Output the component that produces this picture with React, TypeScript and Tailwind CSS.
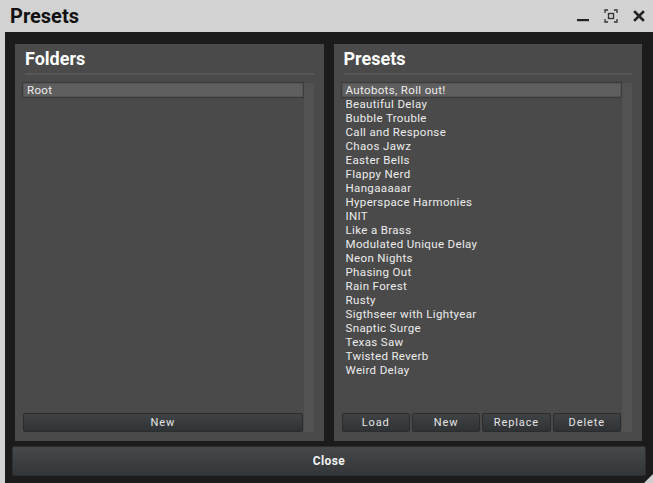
const presets = [
  'Autobots, Roll out!',
  'Beautiful Delay',
  'Bubble Trouble',
  'Call and Response',
  'Chaos Jawz',
  'Easter Bells',
  'Flappy Nerd',
  'Hangaaaaar',
  'Hyperspace Harmonies',
  'INIT',
  'Like a Brass',
  'Modulated Unique Delay',
  'Neon Nights',
  'Phasing Out',
  'Rain Forest',
  'Rusty',
  'Sigthseer with Lightyear',
  'Snaptic Surge',
  'Texas Saw',
  'Twisted Reverb',
  'Weird Delay',
];

const font = { fontFamily: 'Roboto, "Liberation Sans", sans-serif' };

function ListItem({ label, selected }: { label: string; selected?: boolean }) {
  return (
    <div
      className={
        'h-[14px] pl-[4px] text-[11.5px] leading-[14px] tracking-[0.35px] text-[#ececec] whitespace-nowrap ' +
        (selected ? 'bg-[#5f5f5f] shadow-[inset_0_0_0_1px_#545454,0_0_1px_1px_#3c3c3c]' : '')
      }
    >
      {label}
    </div>
  );
}

function PanelButton({ label }: { label: string }) {
  return (
    <button className="flex-1 h-[19px] rounded-[2px] border border-[#2a2c2e] bg-gradient-to-b from-[#404346] to-[#303336] text-[11px] tracking-[0.9px] text-[#e4e4e4] leading-[17px]">
      {label}
    </button>
  );
}

function Panel({
  title,
  items,
  buttons,
}: {
  title: string;
  items: string[];
  buttons: string[];
}) {
  return (
    <div className="flex-1 flex flex-col bg-[#4a4a4a] pt-[3px] pl-[8px] pr-[10px] pb-[9px]">
      <div className="pl-[2px] h-[23px] text-[18px] font-bold leading-[23px] text-white">{title}</div>
      <div className="ml-[2px] mt-[3px] h-[2px] bg-[#575757]" />
      <div className="mt-[8px] flex flex-1 gap-[1px]">
        <div className="flex flex-1 flex-col">
          <div className="flex-1">
            {items.map((it, i) => (
              <ListItem key={it} label={it} selected={i === 0} />
            ))}
          </div>
          <div className="flex gap-[2px]">
            {buttons.map((b) => (
              <PanelButton key={b} label={b} />
            ))}
          </div>
        </div>
        <div className="w-[10px] bg-[#525252]" />
      </div>
    </div>
  );
}

export default function App() {
  return (
    <div className="w-[653px] h-[483px] flex flex-col bg-[#d2d2d2] overflow-hidden" style={font}>
      <div className="h-[32px] flex items-center pl-[10px] pr-[2px]">
        <div className="flex-1 text-[20px] font-bold text-[#111] leading-none">Presets</div>
        <div className="flex items-center gap-[4px]">
          <div className="w-[24px] h-[24px] flex items-center justify-center">
            <svg width="12" height="12" viewBox="0 0 12 12">
              <rect x="0" y="9" width="12" height="2.2" fill="#222" />
            </svg>
          </div>
          <div className="w-[24px] h-[24px] flex items-center justify-center">
            <svg width="14" height="14" viewBox="0 0 14 14" fill="none" stroke="#333" strokeWidth="1.3">
              <path d="M1 4V1h3M10 1h3v3M13 10v3h-3M4 13H1v-3" />
              <rect x="4.5" y="4.5" width="5" height="5" />
            </svg>
          </div>
          <div className="w-[24px] h-[24px] flex items-center justify-center">
            <svg width="12" height="12" viewBox="0 0 12 12" stroke="#222" strokeWidth="2.6" strokeLinecap="square">
              <path d="M2 2l8 8M10 2l-8 8" />
            </svg>
          </div>
        </div>
      </div>
      <div className="relative flex-1 ml-[5px] bg-[#1b1b1b] flex flex-col px-[7px] pt-[12px] pb-[7px]">
        <div className="flex-1 flex gap-[10px] px-[3px] pr-[4px]">
          <Panel title="Folders" items={['Root']} buttons={['New']} />
          <Panel title="Presets" items={presets} buttons={['Load', 'New', 'Replace', 'Delete']} />
        </div>
        <button className="mt-[5px] h-[30px] rounded-[2px] border border-[#2b2d30] bg-gradient-to-b from-[#46494c] to-[#333639] text-[12px] font-bold tracking-[0.4px] text-[#f2f2f2]">
          Close
        </button>
        <div className="absolute right-0 bottom-0 w-0 h-0 border-l-[9px] border-l-transparent border-b-[9px] border-b-[#cfcfcf]" />
      </div>
    </div>
  );
}
